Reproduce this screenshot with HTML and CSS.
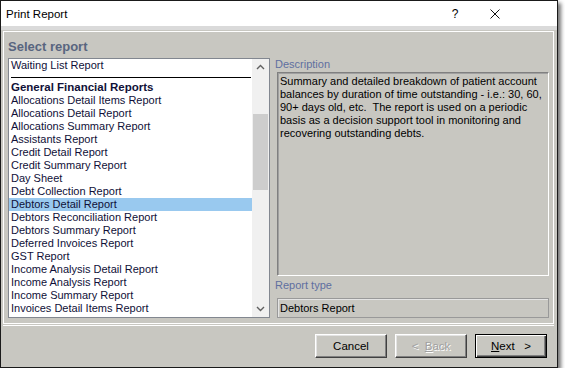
FILE: index.html
```html
<!DOCTYPE html>
<html lang="en">
<head>
  <meta charset="UTF-8" />
  <title>Print Report</title>
  <link rel="stylesheet" href="styles.css">
</head>
<body>
  <div class="window">
    <div class="titlebar">
      <span class="title">Print Report</span>
      <span class="help">?</span>
      <svg class="close" width="10" height="10" viewBox="0 0 10 10">
        <path d="M0.5 0.5 L9.5 9.5 M9.5 0.5 L0.5 9.5" stroke="#111" stroke-width="1" fill="none" />
      </svg>
    </div>
    <div class="band"></div>

    <div class="content">
      <div class="panel">
        <h2 class="heading">Select report</h2>
        <div class="panel-row">
          <div class="listbox">
            <ul class="items">
              <li>Waiting List Report</li>
              <li class="sep"></li>
              <li class="group">General Financial Reports</li>
              <li>Allocations Detail Items Report</li>
              <li>Allocations Detail Report</li>
              <li>Allocations Summary Report</li>
              <li>Assistants Report</li>
              <li>Credit Detail Report</li>
              <li>Credit Summary Report</li>
              <li>Day Sheet</li>
              <li>Debt Collection Report</li>
              <li class="selected">Debtors Detail Report</li>
              <li>Debtors Reconciliation Report</li>
              <li>Debtors Summary Report</li>
              <li>Deferred Invoices Report</li>
              <li>GST Report</li>
              <li>Income Analysis Detail Report</li>
              <li>Income Analysis Report</li>
              <li>Income Summary Report</li>
              <li>Invoices Detail Items Report</li>
              <li>Invoices Detail Report</li>
            </ul>
            <div class="scrollbar">
              <svg class="arrow" width="17" height="17" viewBox="0 0 17 17">
                <polyline points="5,10 8.5,6.5 12,10" stroke="#606060" stroke-width="1.4" fill="none" />
              </svg>
              <div class="track"><div class="thumb"></div></div>
              <svg class="arrow" width="17" height="17" viewBox="0 0 17 17">
                <polyline points="5,7 8.5,10.5 12,7" stroke="#606060" stroke-width="1.4" fill="none" />
              </svg>
            </div>
          </div>

          <div class="details">
            <div class="label">Description</div>
            <div class="desc-box">
              Summary and detailed breakdown of patient account<br>
              balances by duration of time outstanding - i.e.: 30, 60,<br>
              90+ days old, etc.&nbsp; The report is used on a periodic<br>
              basis as a decision support tool in monitoring and<br>
              recovering outstanding debts.
            </div>
            <div class="label label-type">Report type</div>
            <div class="type-box">Debtors Report</div>
          </div>
        </div>
      </div>

      <div class="buttons">
        <button class="btn">Cancel</button>
        <button class="btn btn-disabled">&lt;&nbsp; <u>B</u>ack</button>
        <button class="btn btn-default"><u>N</u>ext&nbsp;&nbsp; &gt;</button>
      </div>
    </div>
  </div>
</body>
</html>
```

FILE: styles.css
```css
*, *::before, *::after { box-sizing: border-box; }

body {
  margin: 0;
  background: #fff;
  font-family: "Liberation Sans", Arial, sans-serif;
  font-size: 11px;
  color: #000;
}

.window {
  width: 558px;
  height: 368px;
  border: 1px solid #1a1a1a;
  background: #c8c7c1;
  box-shadow: 3px 3px 4px rgba(0,0,0,0.55);
  display: flex;
  flex-direction: column;
}

.titlebar {
  height: 25px;
  background: #fff;
  display: flex;
  align-items: center;
  padding: 0 57px 0 5px;
  font-size: 11.5px;
}

.title { flex: 1; }

.help {
  width: 10px;
  text-align: center;
  margin-right: 30px;
  font-size: 12px;
}

.band {
  height: 4px;
  background: #dadada;
}

.content {
  flex: 1;
  padding: 1px 3px 0 2px;
  display: flex;
  flex-direction: column;
}

.panel {
  height: 293px;
  border: 1px solid #fff;
  box-shadow: 0 1px 0 #c8c7c1, 0 2px 0 #fff;
  padding: 7px 4px 5px 4px;
}

.heading {
  margin: 0 0 3px;
  font-size: 13px;
  line-height: 16px;
  font-weight: bold;
  color: #58657f;
}

.panel-row {
  display: flex;
  gap: 5px;
  height: 260px;
}

/* list box */
.listbox {
  width: 262px;
  border: 1px solid #828790;
  background: #fff;
  display: flex;
  overflow: hidden;
}

.items {
  list-style: none;
  margin: 0;
  padding: 0;
  flex: 1;
  overflow: hidden;
  color: #101038;
}

.items li {
  height: 13px;
  line-height: 13px;
  padding-left: 2px;
  white-space: nowrap;
}

.items .sep {
  height: 6px;
  margin: 0 1px 2px 2px;
  padding: 0;
  border-bottom: 1px solid #000;
}

.items .group {
  height: 14px;
  line-height: 14px;
  font-weight: bold;
  font-size: 11.5px;
}

.items .selected { background: #99c9ef; }

.scrollbar {
  width: 17px;
  background: #f0f0f0;
  display: flex;
  flex-direction: column;
}

.arrow { display: block; flex: none; }

.track { flex: 1; }

.thumb {
  margin: 38px 1px 0 1px;
  height: 76px;
  background: #cdcdcd;
}

/* right side */
.details {
  width: 274px;
  display: flex;
  flex-direction: column;
}

.label {
  height: 14px;
  line-height: 13px;
  color: #5f6fa0;
}

.label-type { margin-top: 3px; }

.desc-box {
  margin-left: 2px;
  height: 204px;
  border: 1px solid;
  border-color: #808080 #fff #fff #808080;
  box-shadow: inset 1px 1px 0 #a0a0a0;
  padding: 2px 0 0 2px;
  line-height: 13px;
  white-space: nowrap;
}

.type-box {
  margin: 5px 0 0 2px;
  height: 20px;
  border: 1px solid #999;
  box-shadow: inset 1px 1px 0 #e4e4e4;
  padding-left: 2px;
  line-height: 18px;
}

/* buttons */
.buttons {
  display: flex;
  justify-content: flex-end;
  gap: 8px;
  margin-top: 10px;
  padding-right: 7px;
}

.btn {
  width: 72px;
  height: 24px;
  padding: 0;
  border: 1px solid;
  border-color: #fff #404040 #404040 #fff;
  box-shadow: inset -1px -1px 0 #808080, inset 1px 1px 0 #e3e3e3;
  background: #c8c7c1;
  font-family: "Liberation Sans", Arial, sans-serif;
  font-size: 11.5px;
  color: #000;
}

.btn u { text-underline-offset: 1px; }

.btn-disabled {
  color: #a0a0a0;
  text-shadow: 1px 1px 0 #fff;
}

.btn-default {
  border-color: #000;
  box-shadow: inset 1px 1px 0 #fff, inset -1px -1px 0 #404040, inset -2px -2px 0 #808080;
}
```
